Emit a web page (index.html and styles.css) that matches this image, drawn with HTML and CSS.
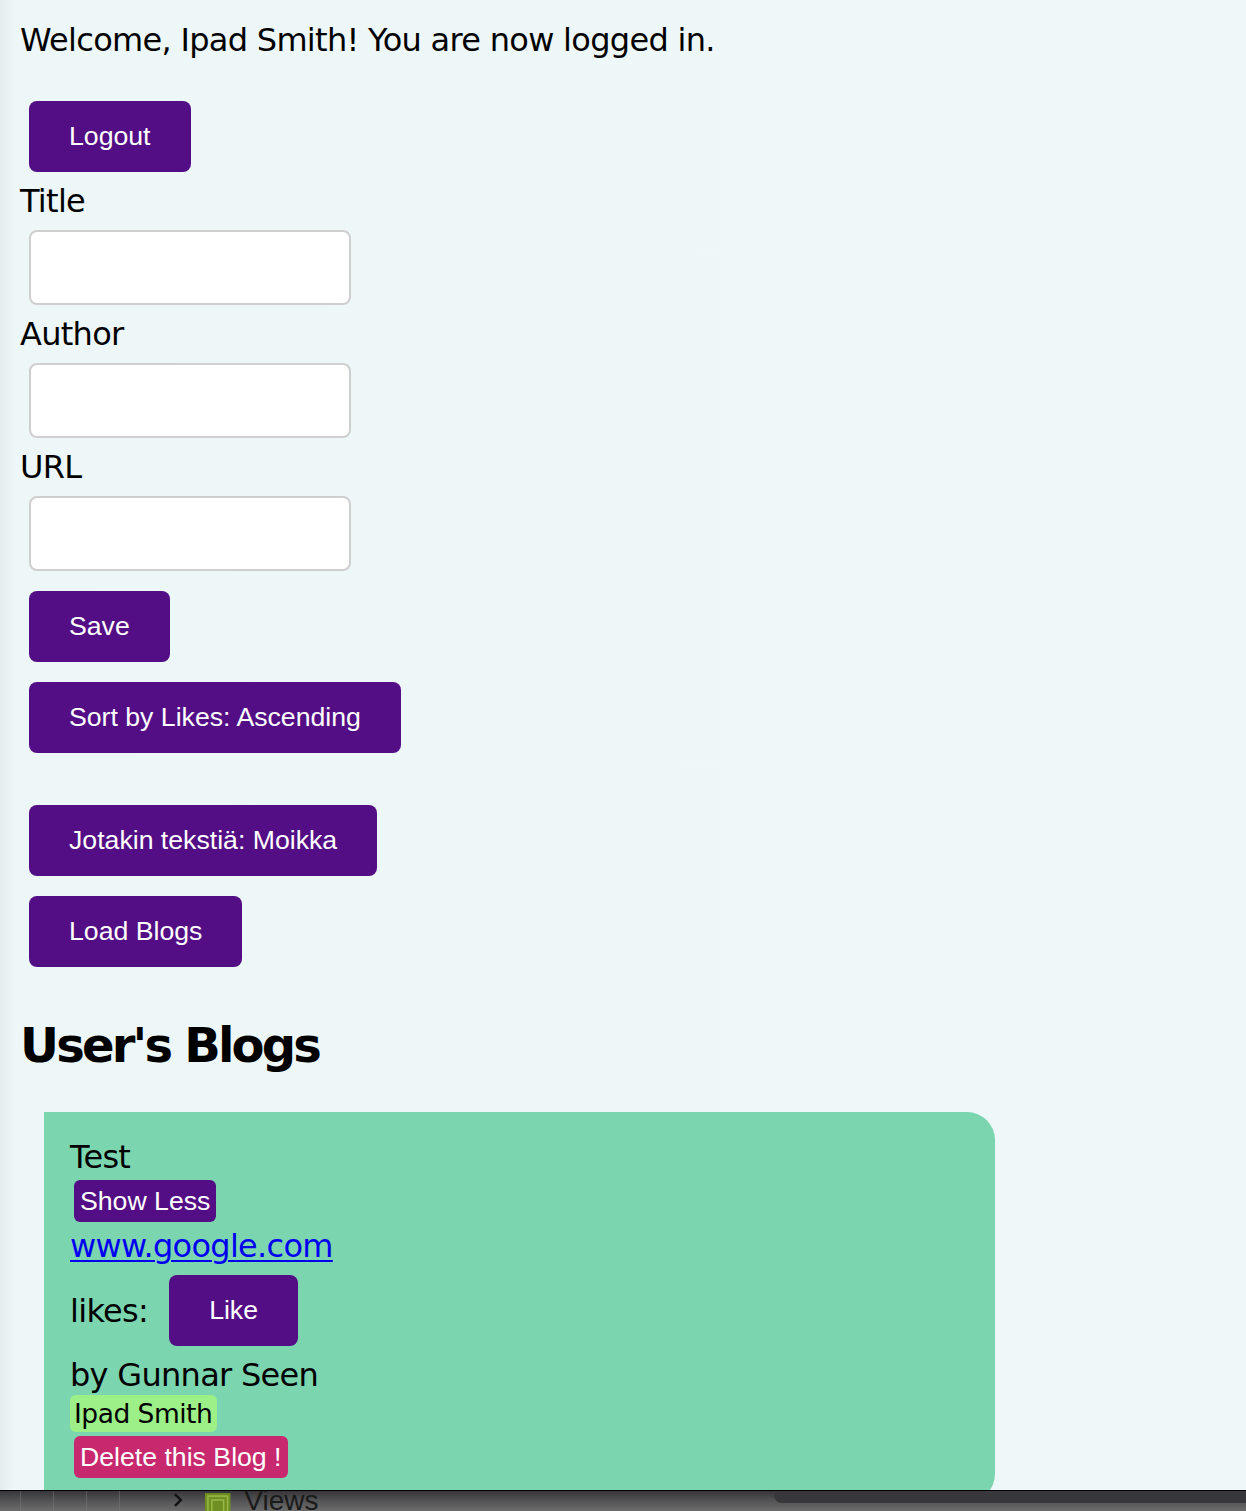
FILE: index.html
```html
<!DOCTYPE html>
<html lang="en">
<head>
<meta charset="utf-8">
<title>Blogs</title>
<link rel="stylesheet" href="styles.css">
</head>
<body>
<div class="page">
  <p class="welcome">Welcome, Ipad Smith! You are now logged in.</p>
  <button class="btn btn-logout">Logout</button>
  <form class="blog-form">
    <label class="field-label">Title</label>
    <input class="field-input" type="text">
    <label class="field-label">Author</label>
    <input class="field-input" type="text">
    <label class="field-label">URL</label>
    <input class="field-input" type="text">
    <button class="btn btn-save" type="button">Save</button>
  </form>
  <button class="btn btn-sort">Sort by Likes: Ascending</button>
  <div class="spacer"></div>
  <button class="btn btn-text">Jotakin tekstiä: Moikka</button>
  <button class="btn btn-load">Load Blogs</button>
  <h2 class="heading">User's Blogs</h2>
  <div class="card">
    <div class="card-title">Test</div>
    <div><button class="mini mini-purple">Show Less</button></div>
    <a class="card-link" href="#">www.google.com</a>
    <div class="likes-row"><span>likes:</span><button class="btn btn-like">Like</button></div>
    <div class="card-by">by Gunnar Seen</div>
    <div><span class="user-badge">Ipad Smith</span></div>
    <div><button class="mini mini-pink">Delete this Blog !</button></div>
  </div>
</div>
<div class="dock">
  <div class="dock-cells">
    <span class="cell"></span><span class="cell"></span><span class="cell"></span><span class="cell"></span>
  </div>
  <svg class="chev" width="12" height="16" viewBox="0 0 12 16"><path d="M3 2 L9 8 L3 14" fill="none" stroke="#111" stroke-width="2.4"/></svg>
  <svg class="views-icon" width="30" height="20" viewBox="0 0 30 20">
    <rect x="2" y="2" width="26" height="26" fill="#6f8f22"/>
    <rect x="5" y="5" width="20" height="20" fill="none" stroke="#9ab846" stroke-width="1.5"/>
    <rect x="9" y="9" width="12" height="12" fill="none" stroke="#9ab846" stroke-width="1.5"/>
  </svg>
  <span class="views-text">Views</span>
  <span class="dock-panel"></span>
</div>
</body>
</html>
```

FILE: styles.css
```css
html, body {
  margin: 0;
  padding: 0;
}
body {
  background: linear-gradient(to right, #e3edee 0, #edf7f8 14px, #eef8f8 100%);
  font-family: "DejaVu Sans", "Verdana", sans-serif;
  font-size: 32px;
  letter-spacing: -0.7px;
  color: #000;
  min-height: 1511px;
}
.page {
  padding: 0 0 40px 20px;
}
.welcome {
  margin: 0;
  padding-top: 20px;
  line-height: 40px;
}
.btn {
  display: block;
  height: 71px;
  margin-left: 9px;
  padding: 0 40px;
  border: none;
  border-radius: 8px;
  background: #530e86;
  color: #fff;
  font-family: "Liberation Sans", Arial, sans-serif;
  font-size: 26.67px;
  letter-spacing: 0;
  cursor: pointer;
}
.btn-logout {
  margin-top: 41px;
  margin-bottom: 6px;
}
.blog-form {
  margin: 0;
}
.field-label {
  display: block;
  line-height: 46px;
}
.field-input {
  display: block;
  box-sizing: border-box;
  width: 322px;
  height: 75px;
  margin: 6px 0 6px 9px;
  border: 2px solid #cfcfcf;
  border-radius: 8px;
  background: #fff;
}
.btn-save {
  margin-top: 20px;
}
.btn-sort {
  margin-top: 20px;
}
.spacer {
  height: 52px;
}
.btn-load {
  margin-top: 20px;
}
.heading {
  margin: 48px 0 37px;
  font-size: 48px;
  line-height: 60px;
  font-weight: bold;
  letter-spacing: -2.8px;
}
.card {
  margin-left: 24px;
  width: 951px;
  box-sizing: border-box;
  padding: 26px 26px 24px;
  background: #7bd6b0;
  border-radius: 0 28px 28px 0;
}
.card-title {
  line-height: 38px;
}
.mini {
  display: inline-block;
  height: 42px;
  margin: 4px 0 0 4px;
  padding: 0 6px;
  border: none;
  border-radius: 6px;
  color: #fff;
  font-family: "Liberation Sans", Arial, sans-serif;
  font-size: 26.67px;
  letter-spacing: 0;
  vertical-align: top;
}
.mini-purple {
  background: #530e86;
}
.mini-pink {
  background: #c8286e;
  margin-top: 3px;
}
.card-link {
  display: inline-block;
  margin-top: 4px;
  line-height: 40px;
  color: #0000ee;
  text-decoration: underline;
  text-decoration-thickness: 2px;
  text-underline-offset: 3px;
}
.likes-row {
  display: flex;
  align-items: center;
  margin-top: 9px;
}
.btn-like {
  margin-left: 21px;
}
.card-by {
  margin-top: 9px;
  line-height: 40px;
}
.user-badge {
  display: inline-block;
  padding: 0 5px 0 4px;
  height: 37px;
  line-height: 38px;
  font-size: 26.5px;
  letter-spacing: -0.5px;
  background: #9df088;
  border-radius: 6px;
  vertical-align: top;
}
.dock {
  position: fixed;
  left: 0;
  right: 0;
  bottom: 0;
  height: 20px;
  border-top: 1px solid #000;
  background: linear-gradient(to bottom, #36363a 0, #545456 50%, #6c6c6c 100%);
  overflow: hidden;
  display: flex;
  align-items: flex-start;
}
.dock-cells {
  display: flex;
  margin-left: 20px;
  height: 20px;
}
.cell {
  width: 32px;
  height: 20px;
  border-left: 1px solid rgba(120, 120, 120, 0.5);
}
.chev {
  margin: 1px 0 0 20px;
}
.views-icon {
  margin: 0 0 0 19px;
}
.views-text {
  margin-left: 12px;
  font-family: "Liberation Sans", Arial, sans-serif;
  font-size: 28px;
  line-height: 28px;
  letter-spacing: 0;
  color: #1a1a1a;
  margin-top: -4px;
}
.dock-panel {
  margin-left: 456px;
  width: 480px;
  height: 12px;
  border-radius: 0 0 0 8px;
  background: #38383c;
}
```
